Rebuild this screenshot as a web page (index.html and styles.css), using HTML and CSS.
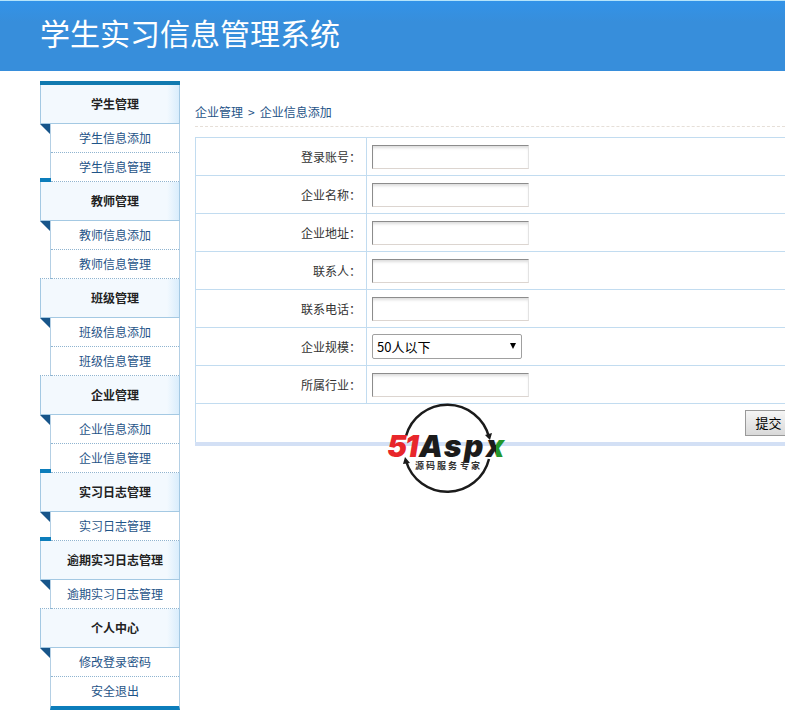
FILE: index.html
```html
<!DOCTYPE html>
<html lang="zh-CN">
<head>
    <meta charset="UTF-8">
    <meta name="viewport" content="width=device-width, initial-scale=1.0">
    <title>学生实习信息管理系统</title>
    <link rel="stylesheet" href="styles.css">
</head>
<body>
    <header class="header">
        <h1>学生实习信息管理系统</h1>
    </header>
    <div class="container">
        <nav class="sidebar">
            <section class="group">
                <h2>学生管理</h2>
                <ul>
                    <li><a href="#">学生信息添加</a></li>
                    <li><a href="#">学生信息管理</a></li>
                </ul>
            </section>
            <section class="group marked">
                <h2>教师管理</h2>
                <ul>
                    <li><a href="#">教师信息添加</a></li>
                    <li><a href="#">教师信息管理</a></li>
                </ul>
            </section>
            <section class="group">
                <h2>班级管理</h2>
                <ul>
                    <li><a href="#">班级信息添加</a></li>
                    <li><a href="#">班级信息管理</a></li>
                </ul>
            </section>
            <section class="group">
                <h2>企业管理</h2>
                <ul>
                    <li><a href="#">企业信息添加</a></li>
                    <li><a href="#">企业信息管理</a></li>
                </ul>
            </section>
            <section class="group marked">
                <h2>实习日志管理</h2>
                <ul>
                    <li><a href="#">实习日志管理</a></li>
                </ul>
            </section>
            <section class="group marked">
                <h2>逾期实习日志管理</h2>
                <ul>
                    <li><a href="#">逾期实习日志管理</a></li>
                </ul>
            </section>
            <section class="group">
                <h2>个人中心</h2>
                <ul>
                    <li><a href="#">修改登录密码</a></li>
                    <li><a href="#">安全退出</a></li>
                </ul>
            </section>
        </nav>

        <main class="main">
            <div class="breadcrumb">
                <a href="#">企业管理</a>
                <span>&gt;</span>
                <a href="#">企业信息添加</a>
            </div>
            <form class="form">
                <table class="form-table">
                    <tr>
                        <th><label for="account">登录账号：</label></th>
                        <td><input type="text" id="account" name="account"></td>
                    </tr>
                    <tr>
                        <th><label for="company">企业名称：</label></th>
                        <td><input type="text" id="company" name="company"></td>
                    </tr>
                    <tr>
                        <th><label for="address">企业地址：</label></th>
                        <td><input type="text" id="address" name="address"></td>
                    </tr>
                    <tr>
                        <th><label for="contact">联系人：</label></th>
                        <td><input type="text" id="contact" name="contact"></td>
                    </tr>
                    <tr>
                        <th><label for="phone">联系电话：</label></th>
                        <td><input type="text" id="phone" name="phone"></td>
                    </tr>
                    <tr>
                        <th><label for="scale">企业规模：</label></th>
                        <td>
                            <div class="select-box">
                                <select id="scale" name="scale">
                                    <option>50人以下</option>
                                </select>
                            </div>
                        </td>
                    </tr>
                    <tr>
                        <th><label for="industry">所属行业：</label></th>
                        <td><input type="text" id="industry" name="industry"></td>
                    </tr>
                    <tr>
                        <td class="actions" colspan="2"><button type="submit">提交</button></td>
                    </tr>
                </table>
            </form>

            <svg class="watermark" width="128" height="94" viewBox="0 0 128 94">
                <defs>
                    <linearGradient id="xFill">
                        <stop offset="0.55" stop-color="#1b1b1b"/>
                        <stop offset="0.55" stop-color="#23962c"/>
                    </linearGradient>
                </defs>
                <g fill="none" stroke="#1b1b1b" stroke-width="2.5">
                    <path d="M21 35A43 43 0 0 1 104 36"/>
                    <path d="M104 58A43 43 0 0 1 21 60"/>
                </g>
                <path d="M100 34l7-2-2 7zM18 63l2-7 5 6z" fill="#1b1b1b"/>
                <g class="logo-text">
                    <text x="2 20" y="56" fill="#e8262b">51</text>
                    <text x="34 59 79" y="56" fill="#1b1b1b">Asp</text>
                    <text x="101" y="56" fill="url(#xFill)">x</text>
                </g>
                <text class="logo-sub" x="30 41 52 63 75 86" y="68">源码服务专家</text>
            </svg>
        </main>
    </div>
</body>
</html>
```
FILE: styles.css
```css
body {
    margin: 0;
    font-family: "Noto Sans CJK SC", sans-serif;
    font-size: 12px;
    color: #333;
    background: #fff;
}
a {
    color: #1f5488;
    text-decoration: none;
}
.header {
    height: 70px;
    padding-left: 40px;
    border-top: 1px solid #b5e4fa;
    background: linear-gradient(#3393e8, #378edb 30%);
}
.header h1 {
    margin: 0;
    font-size: 30px;
    font-weight: normal;
    line-height: 62px;
    color: #fff;
}
.container {
    display: flex;
    align-items: flex-start;
    gap: 15px;
    padding: 10px 0 10px 40px;
}

/* sidebar */
.sidebar {
    flex: none;
    width: 140px;
    border-top: 4px solid #117ab0;
}
.group {
    position: relative;
}
.group h2 {
    box-sizing: border-box;
    height: 39px;
    margin: 0;
    padding-left: 10px;
    border: 1px solid #a4c9e3;
    border-top: none;
    background: linear-gradient(to left, #d9edfc, #f3f9fe 12px);
    font-size: 12px;
    font-weight: bold;
    line-height: 38px;
    text-align: center;
    color: #222;
}
.group h2::after {
    content: "";
    position: absolute;
    top: 39px;
    left: 0;
    border-top: 10px solid #17558a;
    border-left: 10px solid transparent;
}
.group + .group::before {
    content: "";
    position: absolute;
    top: -1px;
    left: 0;
    width: 11px;
    border-top: 1px dotted #8fb4d0;
}
.group + .marked::before {
    top: -4px;
    border-top: 4px solid #0c7dbb;
}
.group ul {
    margin: 0 0 0 10px;
    padding: 0;
    list-style: none;
    border-left: 1px solid #b4cfe4;
    border-right: 1px solid #b4cfe4;
}
.group li {
    height: 28px;
    border-bottom: 1px dotted #8fb4d0;
    line-height: 28px;
    text-align: center;
}
.group:last-child ul {
    border-bottom: 4px solid #0c7dbb;
}
.group:last-child li:last-child {
    border-bottom-color: transparent;
}

/* content */
.main {
    position: relative;
    flex: 1;
    min-width: 0;
}
.breadcrumb {
    display: flex;
    gap: 5px;
    margin-bottom: 10px;
    padding-top: 16px;
    border-bottom: 1px dashed #e6dfd8;
    line-height: 29px;
    color: #1f5488;
}
.form {
    overflow: hidden;
}
.form-table {
    width: 100%;
    min-width: 1147px;
    border-collapse: collapse;
    border-bottom: 4px solid #d3e0f5;
}
.form-table th,
.form-table td {
    box-sizing: border-box;
    height: 38px;
    padding: 0 5px;
    border: 1px solid #c2dcf0;
    text-align: left;
}
.form-table th {
    width: 171px;
    font-weight: normal;
    text-align: right;
}
.form-table input {
    display: block;
    box-sizing: border-box;
    width: 157px;
    height: 24px;
    padding: 2px 4px;
    border: 1px solid;
    border-color: #8c8c8c #e3e3e3 #dcd5d0 #8c8c8c;
    box-shadow: inset 0 3px 3px -1px #ddd;
}
.select-box {
    position: relative;
    width: 150px;
}
.select-box::after {
    content: "";
    position: absolute;
    top: 9px;
    right: 6px;
    border: 3px solid transparent;
    border-top: 6px solid #000;
    pointer-events: none;
}
.select-box select {
    display: block;
    appearance: none;
    width: 100%;
    height: 25px;
    padding: 0 4px;
    border: 1px solid #a0a0a0;
    border-radius: 2px;
    background: #fff;
    font-family: inherit;
    font-size: 13px;
    color: #000;
}
.form-table .actions {
    height: 40px;
    border-bottom: 4px solid #d3e0f5;
    text-align: center;
}
.actions button {
    height: 26px;
    padding: 0 9px;
    border: 1px solid #999;
    background: linear-gradient(#f5f5f5, #d9d9d9);
    font-family: inherit;
    font-size: 13px;
    line-height: 24px;
    color: #000;
}

/* logo laid over the form */
.watermark {
    position: absolute;
    top: 320px;
    left: 190px;
    pointer-events: none;
}
.logo-text {
    font-family: Inter, sans-serif;
    font-size: 30px;
    font-weight: 900;
    font-style: italic;
}
.logo-sub {
    font-size: 9px;
    font-weight: bold;
    fill: #333;
}
```
